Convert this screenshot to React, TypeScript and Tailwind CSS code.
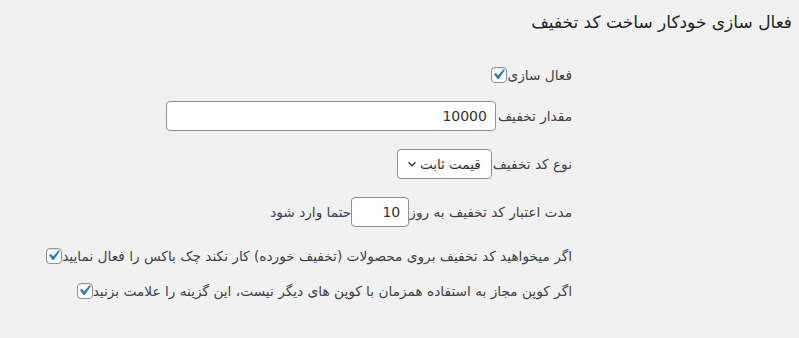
import React, { useState } from 'react';

const font = { fontFamily: '"DejaVu Sans", Tahoma, sans-serif' };

const Check = ({ checked, onChange }: { checked: boolean; onChange: () => void }) => (
  <button
    type="button"
    onClick={onChange}
    className="relative w-4 h-4 shrink-0 bg-white border border-[#8c8f94] rounded-[4px] shadow-[inset_0_1px_2px_rgba(0,0,0,0.1)]"
  >
    {checked && (
      <svg viewBox="0 0 20 20" className="absolute w-[21px] h-[21px] left-[-4px] top-[-4px]">
        <path d="M14.83 4.89l1.34.94-5.81 8.38H9.02L5.78 9.67l1.34-1.25 2.57 2.4z" fill="#2f7cc0" />
      </svg>
    )}
  </button>
);

const App: React.FC = () => {
  const [active, setActive] = useState(true);
  const [amount, setAmount] = useState('10000');
  const [type, setType] = useState('fixed');
  const [days, setDays] = useState('10');
  const [retail, setRetail] = useState(true);
  const [combine, setCombine] = useState(true);

  return (
    <div dir="rtl" className="w-full h-[338px] bg-[#f1f1f1] text-[#3c434a] text-[13.7px]" style={font}>
      <h2 className="pt-[10px] pr-[7px] text-[17px] leading-[24px] text-[#1d2327] font-normal">
        فعال سازی خودکار ساخت کد تخفیف
      </h2>

      <div className="pr-[227px] flex flex-col items-start">
        <label className="mt-[33px] h-4 flex items-center">
          <span className="leading-4">فعال سازی</span>
          <Check checked={active} onChange={() => setActive(!active)} />
        </label>

        <label className="mt-[18px] flex items-center">
          <span className="ml-[2px]">مقدار تخفیف</span>
          <input
            value={amount}
            onChange={e => setAmount(e.target.value)}
            className="w-[330px] h-[30px] bg-white border border-[#8c8f94] rounded-[4px] px-2 text-[14px] text-[#2c3338] outline-none"
            style={font}
          />
        </label>

        <label className="mt-[18px] flex items-center">
          <span className="ml-[1px]">نوع کد تخفیف</span>
          <div className="relative">
            <select
              value={type}
              onChange={e => setType(e.target.value)}
              className="appearance-none w-[95px] h-[30px] bg-white border border-[#8c8f94] rounded-[4px] pr-[10px] pl-[18px] text-[13.5px] text-[#2c3338] outline-none"
              style={font}
            >
              <option value="fixed">قیمت ثابت</option>
              <option value="percent">درصد</option>
            </select>
            <svg viewBox="0 0 20 20" className="absolute left-[8px] top-[8px] w-[14px] h-[14px] pointer-events-none">
              <path d="M5 7.5l5 5 5-5" fill="none" stroke="#2c3338" strokeWidth="1.8" />
            </svg>
          </div>
        </label>

        <label className="mt-[18px] flex items-center">
          <span>مدت اعتبار کد تخفیف به روز</span>
          <input
            value={days}
            onChange={e => setDays(e.target.value)}
            className="w-[58px] h-[30px] bg-white border border-[#8c8f94] rounded-[4px] px-2 text-[14px] text-[#2c3338] outline-none"
            style={font}
          />
          <span>حتما وارد شود</span>
        </label>

        <label className="mt-[21px] h-4 flex items-center">
          <span className="leading-4">اگر میخواهید کد تخفیف بروی محصولات (تخفیف خورده) کار نکند چک باکس را فعال نمایید</span>
          <Check checked={retail} onChange={() => setRetail(!retail)} />
        </label>

        <label className="mt-[19px] h-4 flex items-center">
          <span className="leading-4">اگر کوپن مجاز به استفاده همزمان با کوپن های دیگر نیست، این گزینه را علامت بزنید</span>
          <Check checked={combine} onChange={() => setCombine(!combine)} />
        </label>
      </div>
    </div>
  );
};

export default App;
